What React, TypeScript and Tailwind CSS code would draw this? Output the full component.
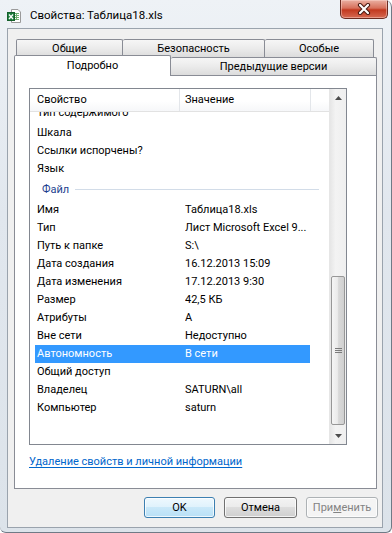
import React from "react"

// ── Data ──────────────────────────────────────────────────────────────────────

const TOP_ROWS = ["Тип содержимого", "Шкала", "Ссылки испорчены?", "Язык"]

const FILE_ROWS: [string, string][] = [
  ["Имя", "Таблица18.xls"],
  ["Тип", "Лист Microsoft Excel 9..."],
  ["Путь к папке", "S:\\"],
  ["Дата создания", "16.12.2013 15:09"],
  ["Дата изменения", "17.12.2013 9:30"],
  ["Размер", "42,5 КБ"],
  ["Атрибуты", "A"],
  ["Вне сети", "Недоступно"],
  ["Автономность", "В сети"],
  ["Общий доступ", ""],
  ["Владелец", "SATURN\\all"],
  ["Компьютер", "saturn"],
]

const SELECTED = "Автономность"

// ── Small drawings ────────────────────────────────────────────────────────────

function ExcelIcon() {
  return (
    <svg width="16" height="16" viewBox="0 0 16 16">
      <path d="M5.5 1.5h6.5l2.5 2.5v10.5h-9z" fill="#fff" stroke="#9a9a9a" />
      <path d="M8 5.5h5M8 7.5h5M8 9.5h5M8 11.5h5M10.5 5v7" stroke="#6fb36f" strokeWidth="1" />
      <rect x="1.5" y="4.5" width="7" height="8" fill="#1e7d3c" stroke="#14602b" />
      <path d="M3 6.5l4 4.5M7 6.5l-4 4.5" stroke="#fff" strokeWidth="1.3" />
    </svg>
  )
}

function CloseGlyph() {
  return (
    <svg width="14" height="12" viewBox="0 0 14 12">
      <path d="M3 2l8 8M11 2l-8 8" stroke="#4a1a12" strokeWidth="4.2" strokeLinecap="round" />
      <path d="M3 2l8 8M11 2l-8 8" stroke="#fff" strokeWidth="2.2" strokeLinecap="round" />
    </svg>
  )
}

function Arrow({ down }: { down?: boolean }) {
  return (
    <svg width="7" height="4" viewBox="0 0 7 4">
      <path d={down ? "M0 0h7l-3.5 4z" : "M0 4h7l-3.5-4z"} fill="#4d4d4d" />
    </svg>
  )
}

function Grip() {
  return (
    <svg width="7" height="6" viewBox="0 0 7 6">
      <path d="M0 0.5h7M0 2.5h7M0 4.5h7" stroke="#7a7a7a" strokeWidth="1" />
    </svg>
  )
}

// ── List view ─────────────────────────────────────────────────────────────────

function Row({ name, value, first }: { name: string; value: string; first?: boolean }) {
  const sel = name === SELECTED
  return (
    <div
      className={`h-[18px] shrink-0 ml-[5px] w-[275px] flex items-center whitespace-nowrap
        ${first ? "-mt-[6px] pb-[4px]" : ""}
        ${sel ? "bg-[#3399ff] text-white" : "text-black"}`}
    >
      <div className="w-[150px] pl-[2px] overflow-hidden">{name}</div>
      <div className="flex-1 overflow-hidden text-ellipsis">{value}</div>
    </div>
  )
}

function ScrollBar() {
  return (
    <div className="w-[17px] flex flex-col border-l border-[#e6e6e6] bg-[linear-gradient(to_right,#e6e6e6,#f3f3f3_35%,#efefef)]">
      <div className="h-[17px] flex items-center justify-center"><Arrow /></div>
      <div className="h-[170px]" />
      <div className="h-[149px] mx-px rounded-[2px] border border-[#979797] flex items-center justify-center bg-[linear-gradient(to_right,#f5f5f5,#ebebeb_45%,#d9d9d9_55%,#d0d0d0)]">
        <Grip />
      </div>
      <div className="flex-1" />
      <div className="h-[17px] flex items-center justify-center"><Arrow down /></div>
    </div>
  )
}

function ListView() {
  return (
    <div className="w-[318px] h-[357px] border border-[#828790] bg-white flex">
      <div className="flex-1 flex flex-col min-w-0">
        {/* Header */}
        <div className="h-[23px] shrink-0 flex border-b border-[#e2e2e2] bg-[linear-gradient(to_bottom,#ffffff,#ffffff_55%,#f6f7f9)] relative z-10">
          <div className="w-[150px] pl-[7px] flex items-center border-r border-[#e3e6ea]">Свойство</div>
          <div className="w-[131px] pl-[5px] flex items-center border-r border-[#e3e6ea]">Значение</div>
          <div className="flex-1" />
        </div>

        {/* Rows */}
        <div className="flex-1 overflow-hidden flex flex-col">
          {TOP_ROWS.map((n, i) => <Row key={n} name={n} value="" first={i === 0} />)}

          <div className="h-[23px] shrink-0 flex items-center pl-[12px] pr-[10px]">
            <span className="text-[#1e3f8f]">Файл</span>
            <div className="flex-1 h-px ml-[6px] bg-[#d2dce8]" />
          </div>

          {FILE_ROWS.map(([n, v]) => <Row key={n} name={n} value={v} />)}
        </div>
      </div>
      <ScrollBar />
    </div>
  )
}

// ── Tabs ──────────────────────────────────────────────────────────────────────

const tabOff =
  "h-[18px] flex items-center justify-center border-t border-r border-[#898c95] rounded-t-[2px] bg-[linear-gradient(to_bottom,#f6f6f6,#ebebeb_50%,#dcdcdc)]"

function Tabs() {
  return (
    <div className="flex flex-col">
      <div className="flex ml-[8px]">
        <div className={`${tabOff} w-[107px] border-l`}>Общие</div>
        <div className={`${tabOff} w-[142px]`}>Безопасность</div>
        <div className={`${tabOff} w-[109px]`}>Особые</div>
      </div>
      <div className="flex ml-[6px] h-[18px] items-start">
        <div className="relative z-10 -mt-[2px] h-[21px] w-[157px] bg-white border border-b-0 border-[#898c95] rounded-t-[2px] flex items-center justify-center pb-[1px]">
          Подробно
        </div>
        <div className={`${tabOff} w-[206px]`}>Предыдущие версии</div>
      </div>
    </div>
  )
}

// ── Buttons ───────────────────────────────────────────────────────────────────

function Button({ children, kind }: { children: React.ReactNode; kind: "default" | "normal" | "disabled" }) {
  const cls = {
    default:
      "border-[#3c7fb1] text-black bg-[linear-gradient(to_bottom,#eef8fe_0%,#dff2fc_50%,#c9e8f9_50%,#b9e0f6_100%)]",
    normal:
      "border-[#707070] text-black bg-[linear-gradient(to_bottom,#f3f3f3_0%,#ebebeb_50%,#dddddd_50%,#cfcfcf_100%)]",
    disabled: "border-[#adb2b5] text-[#838383] bg-[#f4f4f4]",
  }[kind]
  return (
    <div
      className={`h-[21px] flex items-center justify-center rounded-[3px] border shadow-[inset_0_0_0_1px_rgba(255,255,255,0.75)] ${cls}`}
    >
      {children}
    </div>
  )
}

// ── App ───────────────────────────────────────────────────────────────────────

export default function App() {
  return (
    <div className="w-[392px] h-[533px] flex flex-col overflow-hidden font-['Roboto',sans-serif] text-[11px] leading-[16px] text-black border-r border-b border-[#6f7a86] rounded-tr-[7px] rounded-br-[6px] rounded-bl-[6px] bg-[linear-gradient(to_bottom,#eef2f6,#e1e7ee_40%,#dce3ea)]">
      {/* Title bar */}
      <div className="h-[28px] shrink-0 flex items-start">
        <div className="ml-[6px] mt-[8px]"><ExcelIcon /></div>
        <div className="ml-[8px] mt-[7px] whitespace-nowrap text-[11.5px]">Свойства: Таблица18.xls</div>
        <div className="ml-auto mr-[3px] w-[48px] h-[19px] flex items-center justify-center rounded-b-[5px] border border-t-0 border-[#6b2b20] bg-[linear-gradient(to_bottom,#eab0a2,#d7705b_45%,#c2391f_55%,#d66a52)] shadow-[inset_0_0_0_1px_rgba(255,220,210,0.45)]">
          <CloseGlyph />
        </div>
      </div>

      {/* Client area */}
      <div className="ml-[7px] w-[376px] h-[500px] shrink-0 border border-[#9aa3ad] bg-[#f0f0f0] flex flex-col pt-[10px]">
        <Tabs />

        <div className="ml-[6px] w-[363px] h-[414px] bg-white border border-[#898c95] flex flex-col pl-[14px] pt-[12px]">
          <ListView />
          <a className="mt-[9px] self-start text-[#0066cc] underline underline-offset-[2px] cursor-pointer">
            Удаление свойств и личной информации
          </a>
        </div>

        <div className="mt-[8px] flex justify-end gap-[9px] pr-[4px]">
          <div className="w-[71px]"><Button kind="default">OK</Button></div>
          <div className="w-[73px]"><Button kind="normal">Отмена</Button></div>
          <div className="w-[72px]">
            <Button kind="disabled">
              <span>При<span className="underline">м</span>енить</span>
            </Button>
          </div>
        </div>
      </div>
    </div>
  )
}
